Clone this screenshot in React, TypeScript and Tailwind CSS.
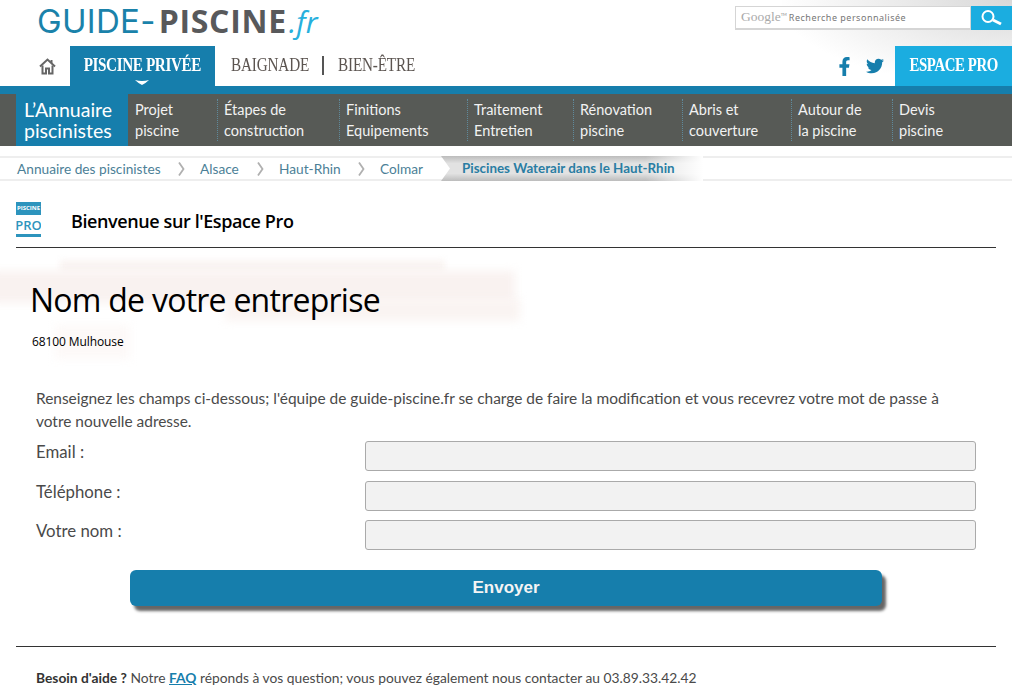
import { FaFacebookF, FaTwitter } from "react-icons/fa";

const MENU = [
  { w: "w-[89px]", a: "Projet", b: "piscine" },
  { w: "w-[122px]", a: "Étapes de", b: "construction" },
  { w: "w-[128px]", a: "Finitions", b: "Equipements" },
  { w: "w-[106px]", a: "Traitement", b: "Entretien" },
  { w: "w-[109px]", a: "Rénovation", b: "piscine" },
  { w: "w-[109px]", a: "Abris et", b: "couverture" },
  { w: "w-[101px]", a: "Autour de", b: "la piscine" },
  { w: "w-[100px]", a: "Devis", b: "piscine" },
];

const CRUMBS = [
  { w: "w-[183px]", label: "Annuaire des piscinistes" },
  { w: "w-[79px]", label: "Alsace" },
  { w: "w-[101px]", label: "Haut-Rhin" },
];

const FIELDS = [
  { label: "Email :", h: "mb-[10px]" },
  { label: "Téléphone :", h: "mb-[9px]" },
  { label: "Votre nom :", h: "mb-[20px]" },
];

function Chevron() {
  return (
    <svg width="7" height="14" viewBox="0 0 7 14" fill="none" className="absolute right-[15px] top-[4px]">
      <path d="M1 0.5l4.5 6.5-4.5 6.5" stroke="#b0b0b0" strokeWidth="1.8" />
    </svg>
  );
}

export default function App() {
  return (
    <div className="relative h-[698px] w-[1012px] overflow-hidden bg-white font-['Lato','Noto_Sans',sans-serif] text-[#4a4a4a]">
      {/* corner shading behind the search box */}
      <div className="absolute right-0 top-0 h-[86px] w-[230px] bg-[radial-gradient(ellipse_at_top_right,#d8d8d8,#ffffff_72%)]" />

      <header className="relative">
        <div className="flex h-[46px] items-start justify-between">
          <div className="ml-[37px] flex items-baseline pt-[5px] leading-none">
            <span className="font-['Inter',sans-serif] text-[33px] font-normal tracking-[0.3px] text-[#1a82aa]">GUIDE-</span>
            <span className="ml-[3px] font-['Open_Sans',sans-serif] text-[32px] font-bold tracking-[0.7px] text-[#58595b]">PISCINE</span>
            <span className="ml-[2px] font-['Open_Sans',sans-serif] text-[30px] italic text-[#27b0dd]">.fr</span>
          </div>
          <div className="mt-[6px] flex h-[24px]">
            <div className="flex w-[236px] items-center border border-b-2 border-[#d5d5d5] bg-white pl-[5px]">
              <span className="font-['Liberation_Serif',serif] text-[13.5px] text-[#aaa]">Google</span>
              <span className="mb-[6px] text-[4px] text-[#888]">TM</span>
              <span className="ml-[2px] font-['Noto_Sans',sans-serif] text-[9px] font-normal tracking-[0.5px] text-[#777]">Recherche personnalisée</span>
            </div>
            <div className="flex w-[41px] items-center justify-center bg-[#1bade0]">
              <svg width="24" height="16" viewBox="0 0 24 16" fill="none">
                <circle cx="8" cy="6.5" r="5.5" stroke="#fff" strokeWidth="2" />
                <path d="M13 10l8 4" stroke="#fff" strokeWidth="3" />
              </svg>
            </div>
          </div>
        </div>

        <nav className="flex h-[40px] items-stretch">
          <div className="flex w-[70px] items-center pl-[39px]">
            <svg width="17" height="17" viewBox="0 0 17 17" fill="none" stroke="#666" strokeWidth="2">
              <path d="M1 8.5 8.5 1.5 16 8.5" />
              <path d="M3.5 7.5V15.5H7V10.5H10V15.5H13.5V7.5" />
              <path d="M12.5 2V5" />
            </svg>
          </div>
          <div className="relative flex w-[145px] items-center justify-center bg-[#167eac] pb-[2px] font-['Liberation_Serif',serif] text-[19px] font-bold tracking-[-0.5px] text-white">
            <span className="origin-center scale-x-[0.8] whitespace-nowrap">PISCINE PRIVÉE</span>
            <svg width="14" height="5" viewBox="0 0 14 5" className="absolute bottom-[1px] left-[65px]">
              <path d="M0 0q7 2 14 0q-3 3-7 5q-4-2-7-5z" fill="#fff" />
            </svg>
          </div>
          <div className="flex items-center pb-[2px] pl-[16px] font-['Liberation_Serif',serif] text-[19px] tracking-[-0.2px] text-[#5b5450]">
            <span className="w-[91px] origin-left scale-x-[0.8] whitespace-nowrap">BAIGNADE</span>
            <span className="h-[19px] w-[2px] bg-[#555]" />
            <span className="ml-[14px] origin-left scale-x-[0.8] whitespace-nowrap">BIEN-ÊTRE</span>
          </div>
          <div className="ml-auto flex items-center">
            <FaFacebookF className="mr-[12px] text-[19px] text-[#167eac]" />
            <FaTwitter className="mr-[11px] text-[18px] text-[#167eac]" />
            <div className="flex h-[40px] w-[117px] items-center justify-center bg-[#1bade0] pb-[2px] font-['Liberation_Serif',serif] text-[19px] tracking-[-0.5px] text-white">
              <span className="origin-center scale-x-[0.78] whitespace-nowrap font-bold">ESPACE PRO</span>
            </div>
          </div>
        </nav>
        <div className="h-[8px] bg-[#167eac]" />

        <div className="flex h-[52px] bg-[#575a56] pl-[16px] text-[14.5px] leading-[21px] text-[#f2f2f2]">
          <div className="flex w-[112px] flex-col justify-center bg-[#167eac] pl-[8px] text-[19.5px] leading-[21px] text-white">
            <span className="whitespace-nowrap">L’Annuaire</span>
            <span className="whitespace-nowrap">piscinistes</span>
          </div>
          {MENU.map((m, i) => (
            <div key={m.a} className={`${m.w} my-[5px] flex flex-col justify-center ${i > 0 ? "border-l border-dotted border-[#5f8a9c] pl-[6px]" : "pl-[7px]"}`}>
              <span className="whitespace-nowrap">{m.a}</span>
              <span className="whitespace-nowrap">{m.b}</span>
            </div>
          ))}
        </div>
      </header>

      <div className="relative mt-[10px] flex h-[25px] items-center border-y-[2px] border-[#eeeeee] pl-[17px] text-[13.7px] text-[#4c7f97]">
        {CRUMBS.map((c) => (
          <span key={c.label} className={`${c.w} relative h-full whitespace-nowrap leading-[22px]`}>
            {c.label}
            <Chevron />
          </span>
        ))}
        <span className="w-[61px] leading-[22px]">Colmar</span>
        <div className="flex h-[25px] w-[262px] items-center bg-[linear-gradient(90deg,rgba(255,255,255,0)_78%,#ffffff),linear-gradient(180deg,#bcbcbc,#e2e2e2_30%,#e2e2e2_70%,#bcbcbc)] pl-[21px] font-bold text-[#2a7da3] [clip-path:polygon(0_0,100%_0,100%_100%,0_100%,9px_50%)]">
          <span className="whitespace-nowrap text-[13.4px]">Piscines Waterair dans le Haut-Rhin</span>
        </div>
      </div>

      <main className="relative px-[16px]">
        {/* pale brush mark behind the company name */}
        <div className="absolute left-[60px] top-[79px] h-[12px] w-[385px] bg-[#faf4f2] blur-[3px]" />
        <div className="absolute -left-[10px] top-[90px] h-[32px] w-[525px] bg-[#f9f2f0] blur-[5px]" />
        <div className="absolute left-[225px] top-[118px] h-[22px] w-[295px] bg-[#faf4f2] blur-[5px]" />
        <div className="absolute left-[55px] top-[144px] h-[34px] w-[75px] bg-[#fdf9f8] blur-[5px]" />

        <div className="relative flex h-[67px] items-start border-b border-[#333] pt-[21px]">
          <div className="flex h-[35px] w-[25px] flex-col items-center overflow-hidden">
            <div className="flex h-[13px] w-full items-center justify-center bg-[#2d94bd] font-['Open_Sans',sans-serif] text-[6px] font-bold text-white">PISCINE</div>
            <div className="h-[19px] font-['Open_Sans',sans-serif] text-[13px] font-semibold leading-[20px] text-[#2d94bd]">PRO</div>
            <div className="mt-auto h-[3px] w-full bg-[#2d94bd]" />
          </div>
          <h2 className="ml-[30px] mt-[6px] font-['Open_Sans',sans-serif] text-[18px] font-semibold leading-[26px] tracking-[-0.4px] text-black">Bienvenue sur l'Espace Pro</h2>
        </div>

        <h1 className="relative mt-[30px] pl-[14px] font-['Open_Sans',sans-serif] text-[32px] leading-[44px] tracking-[-0.75px] text-black">Nom de votre entreprise</h1>
        <p className="relative mt-[11px] pl-[16px] font-['Open_Sans',sans-serif] text-[12px] leading-[18px] tracking-[-0.1px] text-black">68100 Mulhouse</p>

        <form className="relative mt-[36px] px-[20px]">
          <p className="max-w-[915px] text-[15.45px] leading-[23px]">
            Renseignez les champs ci-dessous; l'équipe de guide-piscine.fr se charge de faire la modification et vous recevrez votre mot de passe à votre nouvelle adresse.
          </p>
          <div className="mt-[8px]">
            {FIELDS.map((f) => (
              <div key={f.label} className={`flex h-[30px] ${f.h}`}>
                <label className="w-[329px] text-[16.8px] leading-[22px]">{f.label}</label>
                <input className="h-[30px] w-[611px] rounded-[3px] border border-[#aaaaaa] bg-[#f2f2f2]" />
              </div>
            ))}
          </div>
          <button type="button" className="ml-[94px] block h-[36px] w-[752px] rounded-[6px] bg-[#167eac] font-['Liberation_Sans',sans-serif] text-[17px] font-bold text-[#f4f4f4] shadow-[4px_5px_3px_#666]">
            Envoyer
          </button>
        </form>

        <div className="relative mt-[40px] border-t border-[#333] pl-[20px] pt-[21px] text-[13.8px] leading-[20px]">
          <strong className="text-[#333]">Besoin d'aide ?</strong> Notre <a className="font-bold text-[#167eac] underline">FAQ</a> réponds à vos question; vous pouvez également nous contacter au 03.89.33.42.42
        </div>
      </main>
    </div>
  );
}
